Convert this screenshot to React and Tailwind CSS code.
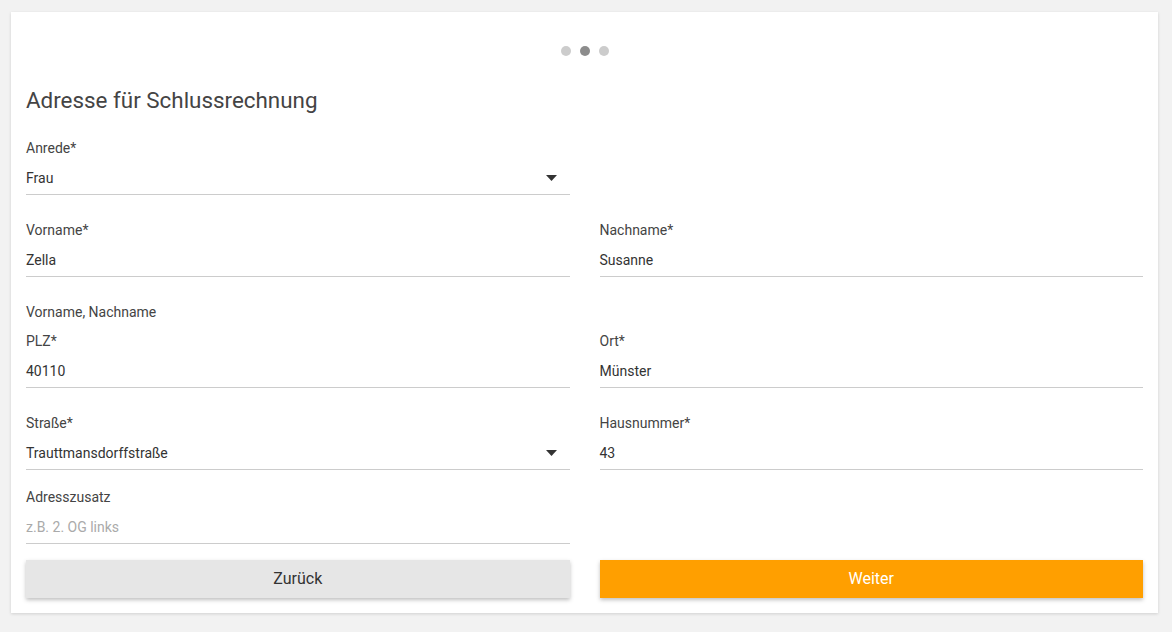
import React from 'react';

function Field({ label, value, placeholder, select }) {
  return (
    <div>
      <div className="h-[20px] leading-[20px] text-[14px] text-[#444] -mt-[1px] mb-[1px]">{label}</div>
      <div className="h-[36px] pt-[3px] border-b border-[#cccccc] flex items-center justify-between">
        {value ? (
          <span className="text-[14px] text-[#333]">{value}</span>
        ) : (
          <span className="text-[14px] text-[#aaa]">{placeholder}</span>
        )}
        {select && (
          <svg className="mr-[13px]" width="11" height="6" viewBox="0 0 11 6">
            <path d="M0 0 L11 0 L5.5 6 Z" fill="#333" />
          </svg>
        )}
      </div>
    </div>
  );
}

export default function App() {
  return (
    <div className="min-h-screen bg-[#f2f2f2] pt-[12px] pl-[11px] pr-[14px] pb-[19px]" style={{ fontFamily: 'Roboto, "Liberation Sans", sans-serif' }}>
      <div className="bg-white px-[15px] pt-[15px] pb-[15px] shadow-[0_1px_3px_rgba(0,0,0,0.14)]">
        {/* step dots */}
        <div className="mt-[19px] flex justify-center gap-[9px] h-[10px]">
          <span className="w-[10px] h-[10px] rounded-full bg-[#cccccc]"></span>
          <span className="w-[10px] h-[10px] rounded-full bg-[#8c8c8c]"></span>
          <span className="w-[10px] h-[10px] rounded-full bg-[#cccccc]"></span>
        </div>

        <h1 className="mt-[30px] text-[22.4px] leading-[28px] text-[#444] font-normal">Adresse für Schlussrechnung</h1>

        <div className="grid grid-cols-2 gap-x-[30px]">
          <div className="mt-[25px]">
            <Field label="Anrede*" value="Frau" select />
          </div>
          <div></div>

          <div className="mt-[26px]">
            <Field label="Vorname*" value="Zella" />
          </div>
          <div className="mt-[26px]">
            <Field label="Nachname*" value="Susanne" />
          </div>

          <div className="mt-[25px] h-[20px] leading-[20px] text-[14px] text-[#444]">Vorname, Nachname</div>
          <div></div>

          <div className="mt-[10px]">
            <Field label="PLZ*" value="40110" />
          </div>
          <div className="mt-[10px]">
            <Field label="Ort*" value="Münster" />
          </div>

          <div className="mt-[26px]">
            <Field label="Straße*" value="Trauttmansdorffstraße" select />
          </div>
          <div className="mt-[26px]">
            <Field label="Hausnummer*" value="43" />
          </div>

          <div className="mt-[18px]">
            <Field label="Adresszusatz" placeholder="z.B. 2. OG links" />
          </div>
          <div></div>

          <button className="mt-[16px] h-[38px] bg-[#e6e6e6] text-[16px] text-[#333] shadow-[0_2px_4px_rgba(0,0,0,0.25)]">Zurück</button>
          <button className="mt-[16px] h-[38px] bg-[#ff9f00] text-[16px] text-white shadow-[0_2px_4px_rgba(0,0,0,0.25)]">Weiter</button>
        </div>
      </div>
    </div>
  );
}
